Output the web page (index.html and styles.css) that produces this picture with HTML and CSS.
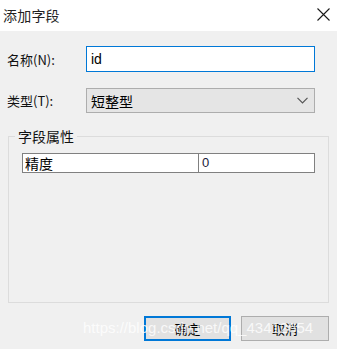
FILE: index.html
```html
<!DOCTYPE html>
<html lang="zh-CN">
<head>
<meta charset="utf-8">
<title>添加字段</title>
<link rel="stylesheet" href="styles.css">
</head>
<body>
<div class="dialog">
  <div class="titlebar">
    <span class="title">添加字段</span>
    <svg class="close" width="13" height="13" viewBox="0 0 13 13"><path d="M0.5 0.5 L12.5 12.5 M12.5 0.5 L0.5 12.5" stroke="#1a1a1a" stroke-width="1.1" fill="none"/></svg>
  </div>
  <div class="body">
    <div class="row row-name">
      <label class="lbl">名称(N):</label>
      <div class="input">id</div>
    </div>
    <div class="row row-type">
      <label class="lbl">类型(T):</label>
      <div class="select">
        <span>短整型</span>
        <svg width="11" height="7" viewBox="0 0 11 7"><path d="M0.5 0.8 L5.5 5.8 L10.5 0.8" stroke="#555" stroke-width="1.2" fill="none"/></svg>
      </div>
    </div>
    <fieldset class="group">
      <legend>字段属性</legend>
      <div class="grid">
        <div class="cell key">精度</div>
        <div class="cell val">0</div>
      </div>
    </fieldset>
    <div class="buttons">
      <div class="btn ok">确定</div>
      <div class="btn">取消</div>
    </div>
  </div>
  <div class="watermark">https://blog.csdn.net/qq_43412654</div>
</div>
</body>
</html>
```

FILE: styles.css
```css
* { box-sizing: border-box; }
html, body { margin: 0; padding: 0; }
body {
  width: 337px;
  height: 349px;
  background: #f0f0f0;
  font-family: "Liberation Sans", "Noto Sans CJK SC", sans-serif;
  font-size: 13px;
  color: #000;
  overflow: hidden;
}
.dialog { position: relative; width: 337px; height: 349px; }
.titlebar {
  height: 31px;
  background: #fff;
  display: flex;
  align-items: center;
  justify-content: space-between;
  padding: 0 7px 2px 3px;
}
.title {
  font-family: "Noto Sans CJK SC", sans-serif;
  font-size: 14px;
  color: #222;
  letter-spacing: 0.2px;
}
.close { margin-top: -1px; }
.body { padding: 15px 0 0 0; }
.row { display: flex; align-items: center; }
.lbl {
  width: 86px;
  padding-left: 7px;
  font-family: "Noto Sans CJK SC", sans-serif;
  font-size: 13px;
  color: #111;
}
.row-name { height: 26px; }
.row-type { height: 25px; margin-top: 16px; }
.input {
  width: 229px;
  height: 26px;
  border: 1px solid #0078d7;
  background: #fff;
  padding: 3px 4px;
  font-size: 14px;
  line-height: 18px;
}
.select {
  width: 229px;
  height: 25px;
  border: 1px solid #adadad;
  background: #e5e5e5;
  display: flex;
  align-items: center;
  justify-content: space-between;
  padding: 0 6px 0 4px;
  font-family: "Noto Sans CJK SC", sans-serif;
  font-size: 14px;
}
.group {
  margin: 15px 8px 0 8px;
  padding: 9px 13px 0 13px;
  height: 175px;
  border: 1px solid #dcdcdc;
  border-radius: 0;
}
.group legend {
  padding: 0 3px;
  margin-left: -7px;
  font-family: "Noto Sans CJK SC", sans-serif;
  font-size: 14px;
  line-height: 16px;
  color: #111;
}
.grid {
  display: grid;
  grid-template-columns: 176px 1fr;
  width: 293px;
  height: 20px;
  border: 1px solid #808080;
  background: #fff;
}
.cell {
  font-family: "Noto Sans CJK SC", sans-serif;
  font-size: 14px;
  line-height: 18px;
  padding-left: 2px;
}
.key { border-right: 1px solid #808080; }
.val { font-family: "Liberation Sans", sans-serif; font-size: 13px; color: #1a1a3a; padding-left: 3px; }
.buttons {
  display: flex;
  justify-content: flex-end;
  gap: 10px;
  padding-right: 8px;
  margin-top: 13px;
}
.btn {
  width: 88px;
  height: 25px;
  border: 1px solid #adadad;
  background: #e1e1e1;
  display: flex;
  align-items: center;
  justify-content: center;
  font-family: "Noto Sans CJK SC", sans-serif;
  font-size: 13px;
}
.btn.ok { border: 2px solid #0078d7; width: 87px; }
.watermark {
  position: absolute;
  left: 83px;
  top: 319px;
  font-family: "Liberation Sans", sans-serif;
  font-size: 15px;
  color: rgba(255,255,255,0.8);
  white-space: nowrap;
  pointer-events: none;
}
```
